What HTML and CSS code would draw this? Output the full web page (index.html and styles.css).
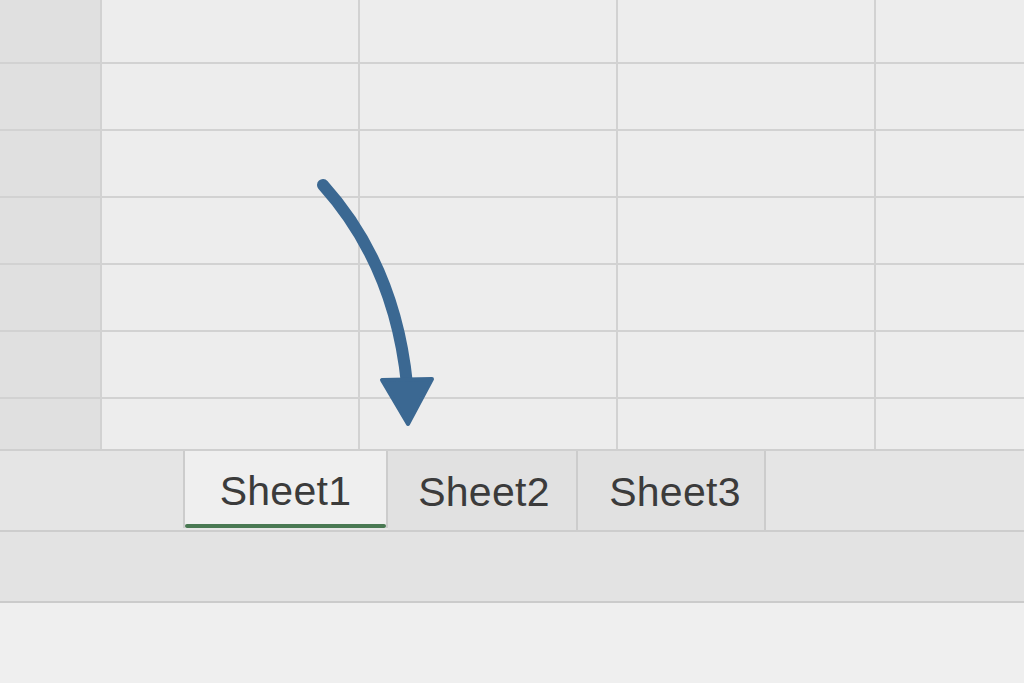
FILE: index.html
```html
<!DOCTYPE html>
<html lang="en">
<head>
  <meta charset="UTF-8">
  <meta name="viewport" content="width=device-width, initial-scale=1.0">
  <title>Sheet tabs</title>
  <link rel="stylesheet" href="styles.css">
</head>
<body>

  <div class="sheet">
    <div class="grid">
      <div class="head"></div><div class="cell"></div><div class="cell"></div><div class="cell"></div><div class="cell"></div>
      <div class="head"></div><div class="cell"></div><div class="cell"></div><div class="cell"></div><div class="cell"></div>
      <div class="head"></div><div class="cell"></div><div class="cell"></div><div class="cell"></div><div class="cell"></div>
      <div class="head"></div><div class="cell"></div><div class="cell"></div><div class="cell"></div><div class="cell"></div>
      <div class="head"></div><div class="cell"></div><div class="cell"></div><div class="cell"></div><div class="cell"></div>
      <div class="head"></div><div class="cell"></div><div class="cell"></div><div class="cell"></div><div class="cell"></div>
      <div class="head"></div><div class="cell"></div><div class="cell"></div><div class="cell"></div><div class="cell"></div>
    </div>

    <svg class="arrow" width="1024" height="450" viewBox="0 0 1024 450">
      <path d="M323 185 Q395 265 407 384" fill="none" stroke="#3b6892" stroke-width="12" stroke-linecap="round"/>
      <path d="M382 380 L432 379 L408 424 Z" fill="#3b6892" stroke="#3b6892" stroke-width="4" stroke-linejoin="round"/>
    </svg>
  </div>

  <div class="tabbar">
    <div class="tab active" style="width: 201px">Sheet1</div>
    <div class="tab" style="width: 184px; padding-left: 4px">Sheet2</div>
    <div class="tab" style="width: 178px; padding-left: 8px">Sheet3</div>
  </div>

  <div class="statusbar"></div>
  <div class="footer"></div>

</body>
</html>
```

FILE: styles.css
```css
body { margin: 0; width: 1024px; height: 683px; overflow: hidden; font-family: "Liberation Sans", Arial, sans-serif; background: #efefef; }
.sheet { position: relative; }
.grid { display: grid; grid-template-columns: 100px 256px 256px 256px 1fr; grid-template-rows: 62px repeat(5, 65px) 50px; gap: 2px; background: #d2d2d2; height: 449px; }
.head { background: #e0e0e0; }
.cell { background: #ededed; }
.arrow { position: absolute; left: 0; top: 0; }
.tabbar { display: flex; height: 79px; padding-left: 183px; background: #e5e5e5; border-top: 2px solid #cfcfcf; border-bottom: 2px solid #cdcdcd; }
.tab { display: flex; align-items: center; justify-content: center; padding-top: 4px; background: #e1e1e1; border-right: 2px solid #cccccc; font-size: 41px; letter-spacing: 0.3px; color: #3b3b3b; position: relative; }
.tab.active { background: #efefef; border-left: 2px solid #cccccc; height: 73px; }
.tab.active::after { content: ""; position: absolute; left: 0; right: 0; bottom: 0; height: 4px; border-radius: 2px; background: #497852; }
.statusbar { height: 69px; background: #e3e3e3; border-bottom: 2px solid #cbcbcb; }
.footer { height: 80px; background: #efefef; }
```
